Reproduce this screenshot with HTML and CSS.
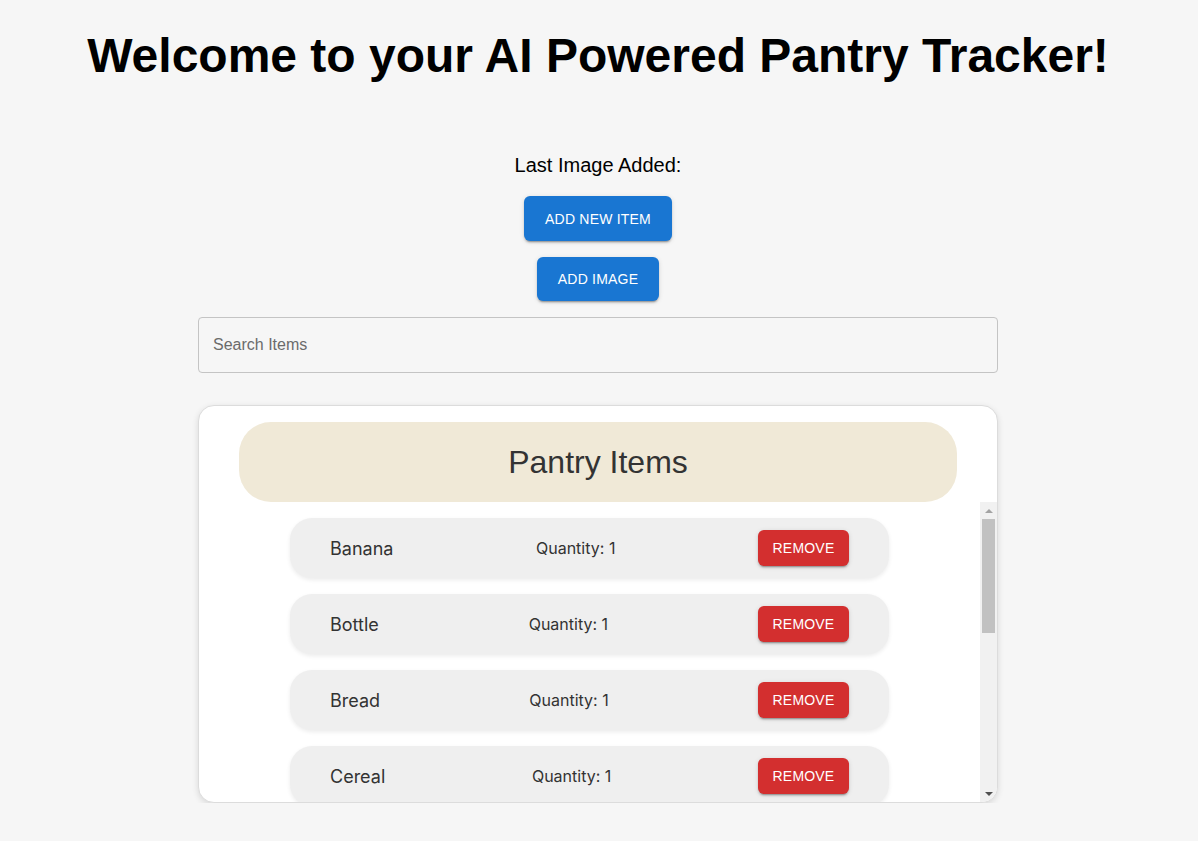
FILE: index.html
```html
<!DOCTYPE html>
<html lang="en">
<head>
<meta charset="utf-8">
<title>Pantry Tracker</title>
<link rel="stylesheet" href="styles.css">
</head>
<body>
<main class="page">
  <h1 class="title">Welcome to your AI Powered Pantry Tracker!</h1>
  <p class="last-image">Last Image Added:</p>
  <button class="btn btn-blue btn-new">Add New Item</button>
  <button class="btn btn-blue btn-image">Add Image</button>
  <input class="search" type="text" placeholder="Search Items">
  <section class="card">
    <div class="card-header"><h2>Pantry Items</h2></div>
    <div class="list-wrap">
      <div class="list">
        <div class="row"><span class="name">Banana</span><span class="qty">Quantity: 1</span><button class="btn btn-red">Remove</button></div>
        <div class="row"><span class="name">Bottle</span><span class="qty">Quantity: 1</span><button class="btn btn-red">Remove</button></div>
        <div class="row"><span class="name">Bread</span><span class="qty">Quantity: 1</span><button class="btn btn-red">Remove</button></div>
        <div class="row"><span class="name">Cereal</span><span class="qty">Quantity: 1</span><button class="btn btn-red">Remove</button></div>
        <div class="row"><span class="name">Eggs</span><span class="qty">Quantity: 1</span><button class="btn btn-red">Remove</button></div>
        <div class="row"><span class="name">Milk</span><span class="qty">Quantity: 1</span><button class="btn btn-red">Remove</button></div>
        <div class="row"><span class="name">Pasta</span><span class="qty">Quantity: 1</span><button class="btn btn-red">Remove</button></div>
        <div class="row"><span class="name">Rice</span><span class="qty">Quantity: 1</span><button class="btn btn-red">Remove</button></div>
        <div class="row"><span class="name">Tomato</span><span class="qty">Quantity: 1</span><button class="btn btn-red">Remove</button></div>
        <div class="row"><span class="name">Yogurt</span><span class="qty">Quantity: 1</span><button class="btn btn-red">Remove</button></div>
      </div>
      <div class="scrollbar" aria-hidden="true">
        <span class="sb-btn"><span class="arrow-up"></span></span>
        <div class="sb-track"><div class="sb-thumb"></div></div>
        <span class="sb-btn"><span class="arrow-down"></span></span>
      </div>
    </div>
  </section>
</main>
</body>
</html>
```

FILE: styles.css
```css
* { box-sizing: border-box; }

html, body {
  margin: 0;
  padding: 0;
  background: #f6f6f6;
  font-family: "Liberation Sans", Arial, sans-serif;
}

.page {
  display: flex;
  flex-direction: column;
  align-items: center;
  padding-top: 28px;
  padding-right: 2px;
}

.title {
  margin: 0;
  font-size: 48px;
  font-weight: 700;
  line-height: 55px;
  color: #000;
}

.last-image {
  margin: 71px 0 0;
  font-size: 20px;
  line-height: 23px;
  color: #000;
}

.btn {
  font-family: "Liberation Sans", Arial, sans-serif;
  text-transform: uppercase;
  border: none;
  color: #fff;
  cursor: pointer;
  letter-spacing: 0.2px;
}

.btn-blue {
  background: #1976d2;
  height: 45px;
  padding: 0 20px;
  border-radius: 6px;
  font-size: 14px;
  box-shadow: 0 3px 1px -2px rgba(0,0,0,0.2), 0 2px 2px 0 rgba(0,0,0,0.14), 0 1px 5px 0 rgba(0,0,0,0.12);
}

.btn-new { margin-top: 19px; width: 148px; }
.btn-image { margin-top: 16px; width: 122px; height: 44px; }

.search {
  margin-top: 16px;
  width: 800px;
  height: 56px;
  border: 1px solid #c4c4c4;
  border-radius: 4px;
  background: transparent;
  padding: 0 14px;
  font-family: "Liberation Sans", Arial, sans-serif;
  font-size: 16px;
  color: #222;
  outline: none;
}
.search::placeholder { color: #6b6b6b; }

.card {
  margin-top: 32px;
  width: 800px;
  height: 398px;
  background: #fff;
  border: 1px solid #dcdcdc;
  border-radius: 16px;
  box-shadow: 0 2px 6px rgba(0,0,0,0.12);
  display: flex;
  flex-direction: column;
  overflow: hidden;
}

.card-header {
  margin: 16px 40px 0;
  height: 80px;
  background: #f0e9d7;
  border-radius: 32px;
  display: flex;
  align-items: center;
  justify-content: center;
  flex-shrink: 0;
}

.card-header h2 {
  margin: 0;
  font-weight: 400;
  font-size: 32px;
  color: #333;
}

.list-wrap {
  flex: 1;
  min-height: 0;
  display: flex;
}

.list {
  flex: 1;
  overflow: hidden;
  display: flex;
  flex-direction: column;
  align-items: center;
  gap: 16px;
  padding: 16px 0;
}

.scrollbar {
  width: 17px;
  flex-shrink: 0;
  background: #f1f1f1;
  display: flex;
  flex-direction: column;
}

.sb-btn {
  height: 17px;
  display: flex;
  align-items: center;
  justify-content: center;
  flex-shrink: 0;
}

.arrow-up {
  width: 0;
  height: 0;
  border-left: 4px solid transparent;
  border-right: 4px solid transparent;
  border-bottom: 4px solid #a3a3a3;
}

.arrow-down {
  width: 0;
  height: 0;
  border-left: 4px solid transparent;
  border-right: 4px solid transparent;
  border-top: 4px solid #505050;
}

.sb-track {
  flex: 1;
  padding: 0 2px;
}

.sb-thumb {
  height: 114px;
  background: #c1c1c1;
}

.row {
  flex-shrink: 0;
  width: 599px;
  height: 60px;
  background: #efefef;
  border-radius: 22px;
  box-shadow: 0 2px 4px rgba(0,0,0,0.08);
  display: flex;
  align-items: center;
  justify-content: space-between;
  padding: 0 40px;
  font-family: Inter, "Noto Sans", sans-serif;
  color: #333;
}

.name { font-size: 18px; }
.qty { font-size: 16px; }

.btn-red {
  background: #d32f2f;
  height: 36px;
  width: 91px;
  padding: 0;
  border-radius: 6px;
  font-size: 14px;
  box-shadow: 0 3px 1px -2px rgba(0,0,0,0.2), 0 2px 2px 0 rgba(0,0,0,0.14), 0 1px 5px 0 rgba(0,0,0,0.12);
}
```
